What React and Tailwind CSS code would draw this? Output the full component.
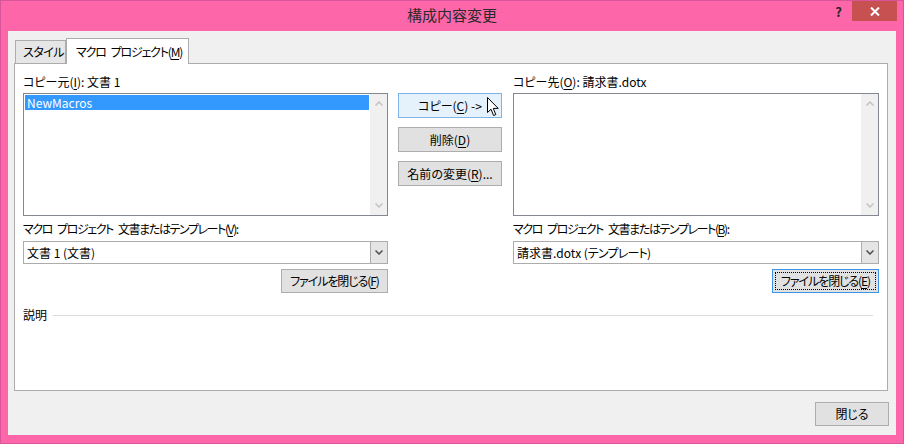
import React from "react";

const font = {
  fontFamily: '"Noto Sans CJK JP", "Noto Sans", sans-serif',
};

function U({ children }) {
  return <span className="underline underline-offset-2">{children}</span>;
}

// visible word gap (palt + tracking squeeze the normal space too much)
function Sp() {
  return <span className="inline-block w-[5px]" />;
}

function Chevron({ up, className }) {
  return (
    <svg width="8" height="5" viewBox="0 0 8 5" className={className}>
      <path
        d={up ? "M0.5 4.5 L4 1 L7.5 4.5" : "M0.5 0.5 L4 4 L7.5 0.5"}
        fill="none"
        stroke="currentColor"
        strokeWidth="1.5"
      />
    </svg>
  );
}

function ListBox({ items = [] }) {
  return (
    <div className="flex h-[123px] border border-[#828790] bg-white">
      <div className="flex-1 p-[1px]">
        {items.map((it) => (
          <div key={it} className="h-[15px] bg-[#3399ff] pl-[2px] text-[12px] leading-[15px] text-white">
            {it}
          </div>
        ))}
      </div>
      <div className="flex w-[17px] flex-col items-center justify-between bg-[#f0f0f0] py-[7px] text-[#c3c3c3]">
        <Chevron up />
        <Chevron />
      </div>
    </div>
  );
}

function Combo({ children }) {
  return (
    <div className="flex h-[23px] border border-[#acacac] bg-white">
      <div className="flex-1 whitespace-nowrap pl-[3px] text-[12px] leading-[21px] text-black">{children}</div>
      <div className="flex w-[17px] items-center justify-center border-l border-[#acacac] bg-[#e5e5e5] text-[#4d4d4d]">
        <Chevron />
      </div>
    </div>
  );
}

function Btn({ children, className = "", variant }) {
  const look =
    variant === "hover"
      ? "border-[#7eb4ea] bg-[#e5f1fb]"
      : variant === "focus"
      ? "border-[#3c94e8] bg-[#e1e1e1]"
      : "border-[#adadad] bg-[#e1e1e1]";
  return (
    <div className={`flex items-center justify-center whitespace-nowrap border text-[12px] text-black ${look} ${className}`}>
      {variant === "focus" ? (
        <div className="flex h-[18px] w-full items-center justify-center border border-dotted border-black">
          <span>{children}</span>
        </div>
      ) : (
        <span>{children}</span>
      )}
    </div>
  );
}

function Cursor() {
  return (
    <svg width="13" height="20" viewBox="0 0 13 20" className="absolute left-[89px] top-[4px]">
      <path
        d="M0.5 0.5 L0.5 15.5 L4 12.2 L6.6 18.5 L8.8 17.6 L6.3 11.4 L11.2 11.4 Z"
        fill="white"
        stroke="black"
        strokeWidth="1"
        strokeLinejoin="miter"
      />
    </svg>
  );
}

export default function App() {
  return (
    <div
      style={font}
      className="flex h-[444px] w-[904px] flex-col border border-[#d9559a] bg-[#fd66a9] [font-feature-settings:'palt']"
    >
      {/* title bar */}
      <div className="grid h-[30px] grid-cols-[1fr_auto_1fr]">
        <div />
        <div className="pt-[4px] text-[15px] leading-[20px] text-[#2b2b2b]">構成内容変更</div>
        <div className="flex items-start justify-end pr-[6px]">
          <div className="mr-[10px] mt-[1px] text-[13px] font-bold leading-[20px] text-[#262626]">?</div>
          <div className="flex h-[20px] w-[45px] items-center justify-center bg-[#c75050] text-white">
            <svg width="10" height="9" viewBox="0 0 10 9">
              <path d="M1 0.5 L9 8.5 M9 0.5 L1 8.5" stroke="white" strokeWidth="2" />
            </svg>
          </div>
        </div>
      </div>

      {/* client area */}
      <div className="ml-[7px] flex h-[404px] w-[888px] flex-col bg-[#f0f0f0]">
        {/* tabs */}
        <div className="flex h-[32px] items-end pl-[7px] pt-[8px]">
          <div className="flex h-[23px] w-[51px] items-center whitespace-nowrap border border-b-0 border-[#acacac] bg-[#e6e6e6] pl-[7px] text-[12px] tracking-[-0.5px] text-black">
            スタイル
          </div>
          <div className="relative top-[1px] flex h-[26px] w-[123px] items-center whitespace-nowrap border border-b-0 border-[#acacac] bg-white pl-[9px] text-[12px] tracking-[-1.2px] text-black">
            <span>
              マクロ<Sp />プロジェクト(<U>M</U>)
            </span>
          </div>
        </div>

        {/* panel */}
        <div className="ml-[6px] flex h-[328px] w-[874px] flex-col border border-[#acacac] bg-white px-[8px]">
          <div className="flex">
            {/* left */}
            <div className="flex w-[366px] flex-col">
              <div className="mt-[10px] h-[16px] whitespace-nowrap text-[12px] leading-[16px] text-black">
                コピー元(<U>I</U>): 文書 1
              </div>
              <div className="mt-[3px]">
                <ListBox items={["NewMacros"]} />
              </div>
              <div className="mt-[5px] h-[16px] whitespace-nowrap text-[12px] leading-[16px] tracking-[-1.4px] text-black">
                マクロ<Sp />プロジェクト<Sp />文書またはテンプレート(<U>V</U>):
              </div>
              <div className="mt-[4px]">
                <Combo>文書 1 (文書)</Combo>
              </div>
              <div className="mt-[5px] flex justify-end">
                <Btn className="h-[24px] w-[107px] tracking-[-1.1px]">
                  ファイルを閉じる(<U>F</U>)
                </Btn>
              </div>
            </div>

            {/* middle */}
            <div className="ml-[10px] flex w-[104px] flex-col gap-[9px] pt-[29px]">
              <div className="relative">
                <Btn variant="hover" className="h-[25px] w-[104px]">
                  コピー(<U>C</U>) -&gt;
                </Btn>
                <Cursor />
              </div>
              <Btn className="h-[25px] w-[104px]">
                削除(<U>D</U>)
              </Btn>
              <Btn className="h-[25px] w-[104px]">
                名前の変更(<U>R</U>)...
              </Btn>
            </div>

            {/* right */}
            <div className="ml-[11px] flex w-[367px] flex-col">
              <div className="mt-[10px] h-[16px] whitespace-nowrap text-[12px] leading-[16px] text-black">
                コピー先(<U>O</U>): 請求書.dotx
              </div>
              <div className="mt-[3px]">
                <ListBox />
              </div>
              <div className="mt-[5px] h-[16px] whitespace-nowrap text-[12px] leading-[16px] tracking-[-1.4px] text-black">
                マクロ<Sp />プロジェクト<Sp />文書またはテンプレート(<U>B</U>):
              </div>
              <div className="mt-[4px] w-[366px]">
                <Combo>
                  請求書.dotx (<span className="tracking-[-0.8px]">テンプレート</span>)
                </Combo>
              </div>
              <div className="mt-[5px] flex w-[366px] justify-end">
                <Btn variant="focus" className="h-[24px] w-[107px] p-[2px] tracking-[-1.1px]">
                  ファイルを閉じる(<U>E</U>)
                </Btn>
              </div>
            </div>
          </div>

          {/* description */}
          <div className="mt-[14px] flex items-center">
            <div className="h-[16px] text-[12px] leading-[16px] text-black">説明</div>
            <div className="ml-[6px] mr-[6px] h-px flex-1 bg-[#dcdcdc]" />
          </div>
        </div>

        {/* bottom */}
        <div className="mr-[7px] mt-[11px] flex justify-end">
          <Btn className="h-[24px] w-[74px]">閉じる</Btn>
        </div>
      </div>
    </div>
  );
}
